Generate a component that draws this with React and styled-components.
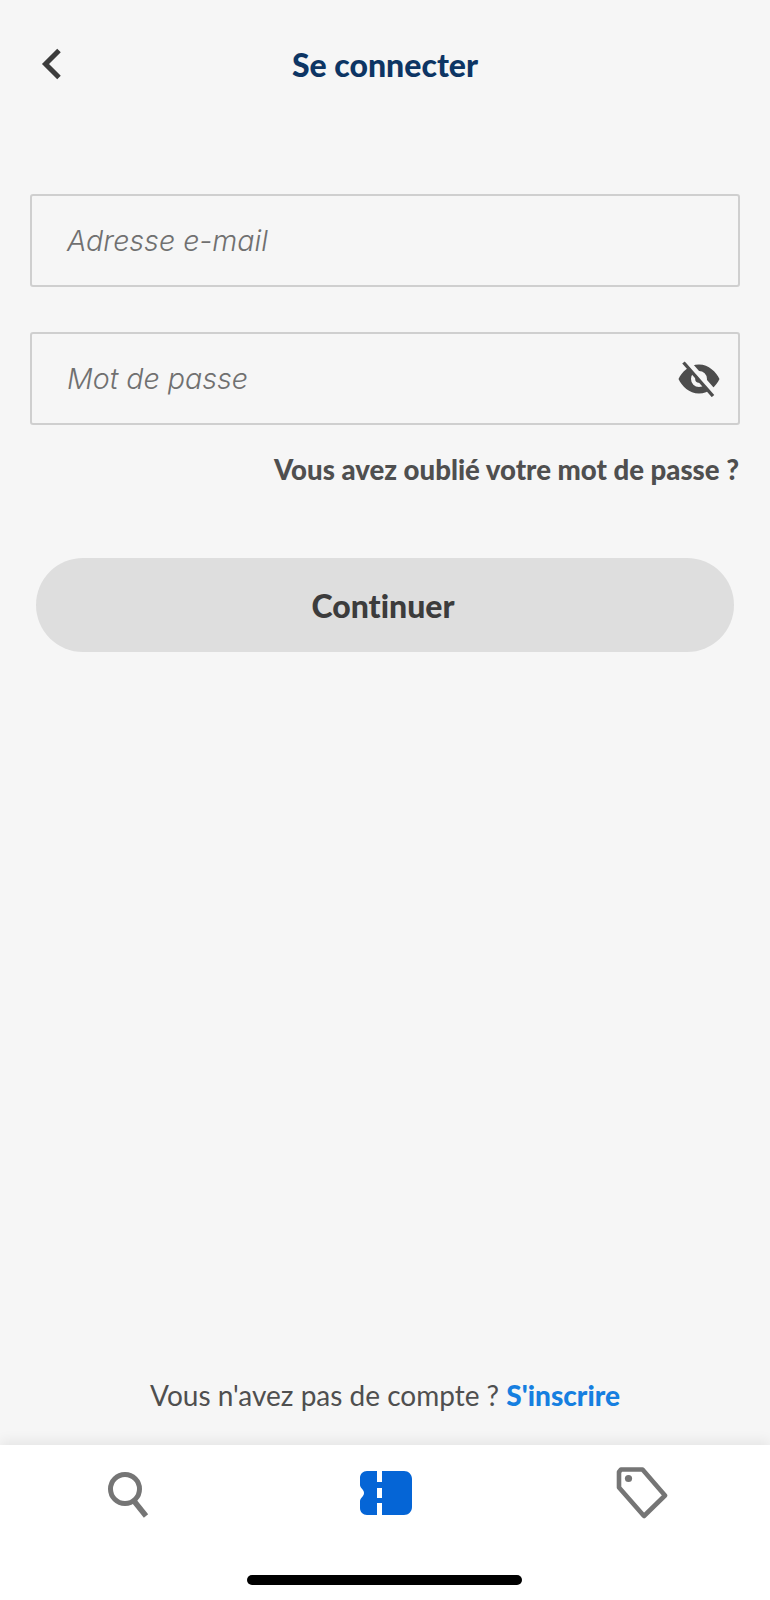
import styled, { createGlobalStyle } from 'styled-components'

const GlobalStyle = createGlobalStyle`
  html, body {
    margin: 0;
    padding: 0;
    background: #f6f6f6;
  }
  * {
    box-sizing: border-box;
  }
`

const App = () => {
  return (
    <Screen>
      <GlobalStyle />
      <Header>
        <BackButton aria-label='Retour'>
          <svg width='24' height='34' viewBox='0 0 24 34' fill='none'>
            <path d='M19 3.5 5.5 17 19 30.5' stroke='#3c3c3c' strokeWidth='5' />
          </svg>
        </BackButton>
        <Title>Se connecter</Title>
      </Header>

      <Form>
        <Field>
          <Placeholder>Adresse e-mail</Placeholder>
        </Field>
        <Field>
          <Placeholder>Mot de passe</Placeholder>
          <EyeButton aria-label='Afficher le mot de passe'>
            <svg width='42' height='36' viewBox='0 0 42 36'>
              <path
                fill='#4d4d4d'
                fillRule='evenodd'
                d='M21 3.500C31 3.500 38 11 41.500 18 38 25 31 32.500 21 32.500 11 32.500 4 25 0.500 18 4 11 11 3.500 21 3.500ZM21 10A8 8 0 1 0 21 26 8 8 0 1 0 21 10Z'
              />
              <circle cx='21' cy='18' r='3.800' fill='#4d4d4d' />
              <path d='M9 0 37 32' stroke='#f6f6f6' strokeWidth='5' />
              <path d='M5.500 1.500 35 35' stroke='#4d4d4d' strokeWidth='3.400' />
            </svg>
          </EyeButton>
        </Field>
      </Form>

      <ForgotLink>Vous avez oublié votre mot de passe ?</ForgotLink>
      <SubmitButton>Continuer</SubmitButton>

      <Spacer />

      <SignupLine>
        Vous n'avez pas de compte ? <SignupLink>S'inscrire</SignupLink>
      </SignupLine>

      <TabBar>
        <Tab $top={3}>
          <svg width='44' height='48' viewBox='0 0 44 48' fill='none' stroke='#757575'>
            <circle cx='19' cy='19' r='14.5' strokeWidth='5' />
            <path d='M28 31 40 46' strokeWidth='5.5' />
          </svg>
        </Tab>
        <Tab $top={4} $left={2}>
          <svg width='52' height='44' viewBox='0 0 52 44'>
            <path
              fill='#0565d6'
              d='M7 0H17V11H22V0H44C48.500 0 52 3.500 52 8V36C52 40.500 48.500 44 44 44H22V32H17V44H7C3 44 0 41 0 37V30C0 27 4 25.500 4 22 4 18.500 0 17 0 14V7C0 3 3 0 7 0ZM17 17V27H22V17H17Z'
            />
          </svg>
        </Tab>
        <Tab>
          <svg width='52' height='52' viewBox='0 0 52 52' fill='none'>
            <path
              d='M5 2.500H26.500L49 28.500 28 49 3 20.500V5Z'
              stroke='#757575'
              strokeWidth='4.6'
              strokeLinejoin='round'
            />
            <circle cx='12.500' cy='11.500' r='3.600' fill='#757575' />
          </svg>
        </Tab>
        <HomeIndicator />
      </TabBar>
    </Screen>
  )
}

const Screen = styled.div`
  display: flex;
  flex-direction: column;
  width: 770px;
  height: 1600px;
  overflow: hidden;
  background: #f6f6f6;
  font-family: 'Lato', 'Liberation Sans', sans-serif;
  font-variant-ligatures: none;
`

const Header = styled.header`
  position: relative;
  display: flex;
  align-items: center;
  justify-content: center;
  height: 62px;
  margin-top: 34px;
`

const BackButton = styled.div`
  position: absolute;
  left: 40px;
  top: 13px;
  display: flex;
`

const Title = styled.h1`
  margin: 0;
  color: #0d3564;
  font-size: 32px;
  font-weight: 900;
  line-height: 60px;
`

const Form = styled.div`
  display: flex;
  flex-direction: column;
  gap: 45px;
  margin: 98px 30px 0;
`

const Field = styled.div`
  display: flex;
  align-items: center;
  justify-content: space-between;
  height: 93px;
  padding: 0 18px 0 35px;
  border: 2px solid #cfcfcf;
  border-radius: 3px;
`

const Placeholder = styled.span`
  color: #707070;
  font-family: 'Inter', 'Liberation Sans', sans-serif;
  font-size: 28.6px;
  font-style: italic;
  font-weight: 300;
`

const EyeButton = styled.div`
  display: flex;
`

const ForgotLink = styled.a`
  align-self: flex-end;
  margin: 26px 31px 0 0;
  color: #4f4f4f;
  font-size: 27.6px;
  font-weight: 900;
  line-height: 38px;
`

const SubmitButton = styled.div`
  display: flex;
  align-items: center;
  justify-content: center;
  height: 94px;
  margin: 69px 36px 0;
  padding-right: 4px;
  border-radius: 47px;
  background: #dedede;
  color: #3c3c3c;
  font-size: 32px;
  font-weight: 900;
`

const Spacer = styled.div`
  flex: 1;
`

const SignupLine = styled.p`
  margin: 0 0 30px;
  color: #4f4f4f;
  font-size: 28px;
  line-height: 40px;
  text-align: center;
`

const SignupLink = styled.a`
  color: #167fe0;
  font-weight: 900;
`

const TabBar = styled.nav`
  position: relative;
  display: grid;
  grid-template-columns: 1fr 1fr 1fr;
  flex-shrink: 0;
  height: 155px;
  padding-top: 22px;
  background: #fff;
  box-shadow: 0 -4px 12px rgba(0, 0, 0, 0.07);
`

const Tab = styled.div`
  display: flex;
  justify-content: center;
  align-items: flex-start;
  padding-top: ${props => props.$top || 0}px;
  padding-left: ${props => props.$left || 0}px;
`

const HomeIndicator = styled.div`
  position: absolute;
  left: 247px;
  bottom: 15px;
  width: 275px;
  height: 10px;
  border-radius: 5px;
  background: #000;
`

export default App
